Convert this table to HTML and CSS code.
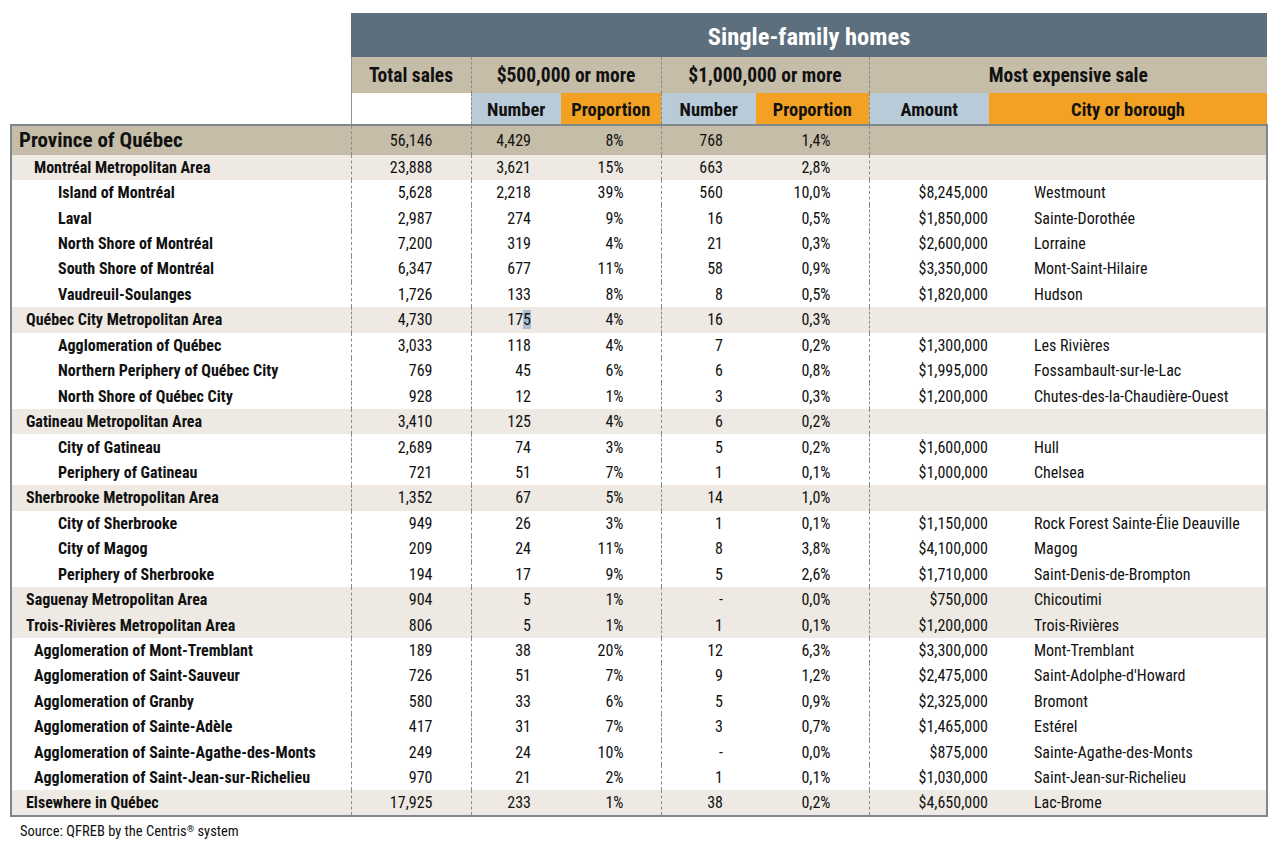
FILE: index.html
```html
<!DOCTYPE html>
<html lang="en">
<head>
<meta charset="utf-8">
<title>Single-family homes</title>
<link rel="stylesheet" href="styles.css">
</head>
<body>
<table class="sales">
  <colgroup>
    <col class="c-label"><col class="c-total"><col class="c-n1"><col class="c-p1"><col class="c-n2"><col class="c-p2"><col class="c-amt"><col class="c-city">
  </colgroup>
  <thead>
    <tr class="h-title">
      <th class="blank" rowspan="3"></th>
      <th class="title" colspan="7">Single-family homes</th>
    </tr>
    <tr class="h-group">
      <th class="grp sep-solid">Total sales</th>
      <th class="grp sep" colspan="2">$500,000 or more</th>
      <th class="grp sep" colspan="2">$1,000,000 or more</th>
      <th class="grp sep" colspan="2">Most expensive sale</th>
    </tr>
    <tr class="h-sub">
      <th class="sub white sep-solid"></th>
      <th class="sub blue sep">Number</th>
      <th class="sub orange">Proportion</th>
      <th class="sub blue sep">Number</th>
      <th class="sub orange">Proportion</th>
      <th class="sub blue sep">Amount</th>
      <th class="sub orange">City or borough</th>
    </tr>
  </thead>
  <tbody>
    <tr class="prov"><td class="lbl l0">Province of Québec</td><td class="tot">56,146</td><td class="n1">4,429</td><td class="p1">8%</td><td class="n2">768</td><td class="p2">1,4%</td><td class="amt"></td><td class="city"></td></tr>
    <tr class="shade"><td class="lbl l1b">Montréal Metropolitan Area</td><td class="tot">23,888</td><td class="n1">3,621</td><td class="p1">15%</td><td class="n2">663</td><td class="p2">2,8%</td><td class="amt"></td><td class="city"></td></tr>
    <tr><td class="lbl l2">Island of Montréal</td><td class="tot">5,628</td><td class="n1">2,218</td><td class="p1">39%</td><td class="n2">560</td><td class="p2">10,0%</td><td class="amt">$8,245,000</td><td class="city">Westmount</td></tr>
    <tr><td class="lbl l2">Laval</td><td class="tot">2,987</td><td class="n1">274</td><td class="p1">9%</td><td class="n2">16</td><td class="p2">0,5%</td><td class="amt">$1,850,000</td><td class="city">Sainte-Dorothée</td></tr>
    <tr><td class="lbl l2">North Shore of Montréal</td><td class="tot">7,200</td><td class="n1">319</td><td class="p1">4%</td><td class="n2">21</td><td class="p2">0,3%</td><td class="amt">$2,600,000</td><td class="city">Lorraine</td></tr>
    <tr><td class="lbl l2">South Shore of Montréal</td><td class="tot">6,347</td><td class="n1">677</td><td class="p1">11%</td><td class="n2">58</td><td class="p2">0,9%</td><td class="amt">$3,350,000</td><td class="city">Mont-Saint-Hilaire</td></tr>
    <tr><td class="lbl l2">Vaudreuil-Soulanges</td><td class="tot">1,726</td><td class="n1">133</td><td class="p1">8%</td><td class="n2">8</td><td class="p2">0,5%</td><td class="amt">$1,820,000</td><td class="city">Hudson</td></tr>
    <tr class="shade"><td class="lbl l1a">Québec City Metropolitan Area</td><td class="tot">4,730</td><td class="n1">17<span class="sel">5</span></td><td class="p1">4%</td><td class="n2">16</td><td class="p2">0,3%</td><td class="amt"></td><td class="city"></td></tr>
    <tr><td class="lbl l2">Agglomeration of Québec</td><td class="tot">3,033</td><td class="n1">118</td><td class="p1">4%</td><td class="n2">7</td><td class="p2">0,2%</td><td class="amt">$1,300,000</td><td class="city">Les Rivières</td></tr>
    <tr><td class="lbl l2">Northern Periphery of Québec City</td><td class="tot">769</td><td class="n1">45</td><td class="p1">6%</td><td class="n2">6</td><td class="p2">0,8%</td><td class="amt">$1,995,000</td><td class="city">Fossambault-sur-le-Lac</td></tr>
    <tr><td class="lbl l2">North Shore of Québec City</td><td class="tot">928</td><td class="n1">12</td><td class="p1">1%</td><td class="n2">3</td><td class="p2">0,3%</td><td class="amt">$1,200,000</td><td class="city">Chutes-des-la-Chaudière-Ouest</td></tr>
    <tr class="shade"><td class="lbl l1a">Gatineau Metropolitan Area</td><td class="tot">3,410</td><td class="n1">125</td><td class="p1">4%</td><td class="n2">6</td><td class="p2">0,2%</td><td class="amt"></td><td class="city"></td></tr>
    <tr><td class="lbl l2">City of Gatineau</td><td class="tot">2,689</td><td class="n1">74</td><td class="p1">3%</td><td class="n2">5</td><td class="p2">0,2%</td><td class="amt">$1,600,000</td><td class="city">Hull</td></tr>
    <tr><td class="lbl l2">Periphery of Gatineau</td><td class="tot">721</td><td class="n1">51</td><td class="p1">7%</td><td class="n2">1</td><td class="p2">0,1%</td><td class="amt">$1,000,000</td><td class="city">Chelsea</td></tr>
    <tr class="shade"><td class="lbl l1a">Sherbrooke Metropolitan Area</td><td class="tot">1,352</td><td class="n1">67</td><td class="p1">5%</td><td class="n2">14</td><td class="p2">1,0%</td><td class="amt"></td><td class="city"></td></tr>
    <tr><td class="lbl l2">City of Sherbrooke</td><td class="tot">949</td><td class="n1">26</td><td class="p1">3%</td><td class="n2">1</td><td class="p2">0,1%</td><td class="amt">$1,150,000</td><td class="city">Rock Forest Sainte-Élie Deauville</td></tr>
    <tr><td class="lbl l2">City of Magog</td><td class="tot">209</td><td class="n1">24</td><td class="p1">11%</td><td class="n2">8</td><td class="p2">3,8%</td><td class="amt">$4,100,000</td><td class="city">Magog</td></tr>
    <tr><td class="lbl l2">Periphery of Sherbrooke</td><td class="tot">194</td><td class="n1">17</td><td class="p1">9%</td><td class="n2">5</td><td class="p2">2,6%</td><td class="amt">$1,710,000</td><td class="city">Saint-Denis-de-Brompton</td></tr>
    <tr class="shade"><td class="lbl l1a">Saguenay Metropolitan Area</td><td class="tot">904</td><td class="n1">5</td><td class="p1">1%</td><td class="n2">-</td><td class="p2">0,0%</td><td class="amt">$750,000</td><td class="city">Chicoutimi</td></tr>
    <tr class="shade"><td class="lbl l1a">Trois-Rivières Metropolitan Area</td><td class="tot">806</td><td class="n1">5</td><td class="p1">1%</td><td class="n2">1</td><td class="p2">0,1%</td><td class="amt">$1,200,000</td><td class="city">Trois-Rivières</td></tr>
    <tr><td class="lbl l1b">Agglomeration of Mont-Tremblant</td><td class="tot">189</td><td class="n1">38</td><td class="p1">20%</td><td class="n2">12</td><td class="p2">6,3%</td><td class="amt">$3,300,000</td><td class="city">Mont-Tremblant</td></tr>
    <tr><td class="lbl l1b">Agglomeration of Saint-Sauveur</td><td class="tot">726</td><td class="n1">51</td><td class="p1">7%</td><td class="n2">9</td><td class="p2">1,2%</td><td class="amt">$2,475,000</td><td class="city">Saint-Adolphe-d'Howard</td></tr>
    <tr><td class="lbl l1b">Agglomeration of Granby</td><td class="tot">580</td><td class="n1">33</td><td class="p1">6%</td><td class="n2">5</td><td class="p2">0,9%</td><td class="amt">$2,325,000</td><td class="city">Bromont</td></tr>
    <tr><td class="lbl l1b">Agglomeration of Sainte-Adèle</td><td class="tot">417</td><td class="n1">31</td><td class="p1">7%</td><td class="n2">3</td><td class="p2">0,7%</td><td class="amt">$1,465,000</td><td class="city">Estérel</td></tr>
    <tr><td class="lbl l1b">Agglomeration of Sainte-Agathe-des-Monts</td><td class="tot">249</td><td class="n1">24</td><td class="p1">10%</td><td class="n2">-</td><td class="p2">0,0%</td><td class="amt">$875,000</td><td class="city">Sainte-Agathe-des-Monts</td></tr>
    <tr><td class="lbl l1b">Agglomeration of Saint-Jean-sur-Richelieu</td><td class="tot">970</td><td class="n1">21</td><td class="p1">2%</td><td class="n2">1</td><td class="p2">0,1%</td><td class="amt">$1,030,000</td><td class="city">Saint-Jean-sur-Richelieu</td></tr>
    <tr class="shade"><td class="lbl l1a">Elsewhere in Québec</td><td class="tot">17,925</td><td class="n1">233</td><td class="p1">1%</td><td class="n2">38</td><td class="p2">0,2%</td><td class="amt">$4,650,000</td><td class="city">Lac-Brome</td></tr>
  </tbody>
</table>
<p class="source">Source: QFREB by the Centris<sup>®</sup> system</p>
</body>
</html>
```

FILE: styles.css
```css
html, body {
  margin: 0;
  padding: 0;
  background: #ffffff;
}
body {
  padding: 13px 0 0 10px;
  font-family: "Roboto Condensed", "Roboto", "Liberation Sans", sans-serif;
  font-stretch: condensed;
  color: #111111;
}
.sales {
  border-collapse: collapse;
  table-layout: fixed;
  width: 1256px;
  font-size: 16px;
}
.c-label { width: 340px; }
.c-total { width: 120px; }
.c-n1 { width: 90px; }
.c-p1 { width: 100px; }
.c-n2 { width: 95px; }
.c-p2 { width: 113px; }
.c-amt { width: 120px; }
.c-city { width: 278px; }

th, td {
  padding: 0;
  white-space: nowrap;
}
.blank { background: transparent; }
.h-title th.title {
  height: 42px;
  padding-top: 2px;
  background: #5d6f7d;
  color: #ffffff;
  font-size: 24.5px;
  font-weight: bold;
  text-align: center;
}
.h-group th {
  height: 36px;
  background: #c6bda9;
  font-size: 19.5px;
  font-weight: bold;
  text-align: center;
}
.h-sub th {
  height: 28px;
  padding-top: 3px;
  font-size: 18.5px;
  font-weight: bold;
  text-align: center;
}
.sub.white { background: #ffffff; }
.sub.blue { background: #b9cbd8; }
.sub.orange { background: #f3a122; }
.sep { border-left: 1px dashed #8a8a8a; }
.sep-solid { border-left: 1px solid #8e9397; }

thead tr.h-sub { border-bottom: 2px solid #80878c; }

tbody {
  border: 2px solid #80878c;
}
tbody tr {
  height: 25.45px;
}
tbody td {
  text-align: right;
}
tbody td.tot,
tbody td.n1,
tbody td.n2,
tbody td.amt {
  border-left: 1px dashed #8a8a8a;
}

tr.prov {
  height: 29.5px;
  background: #c6bda9;
}
tr.shade { background: #eeeae3; }

td.lbl {
  text-align: left;
  font-weight: bold;
}
td.l0 { padding-left: 7px; font-size: 21px; }
td.l1a { padding-left: 14px; }
td.l1b { padding-left: 22px; }
td.l2 { padding-left: 46px; }

td.tot { padding-right: 38px; }
td.n1 { padding-right: 30px; }
td.p1 { padding-right: 37px; }
td.n2 { padding-right: 33px; }
td.p2 { padding-right: 38px; }
td.amt { padding-right: 1px; }
td.city { text-align: left; padding-left: 45px; }

.sel { background: #a9c0d3; }

.source {
  margin: 6px 0 0 10px;
  font-size: 14.5px;
}
.source sup {
  font-size: 9.5px;
  vertical-align: 4px;
  line-height: 0;
}
```
